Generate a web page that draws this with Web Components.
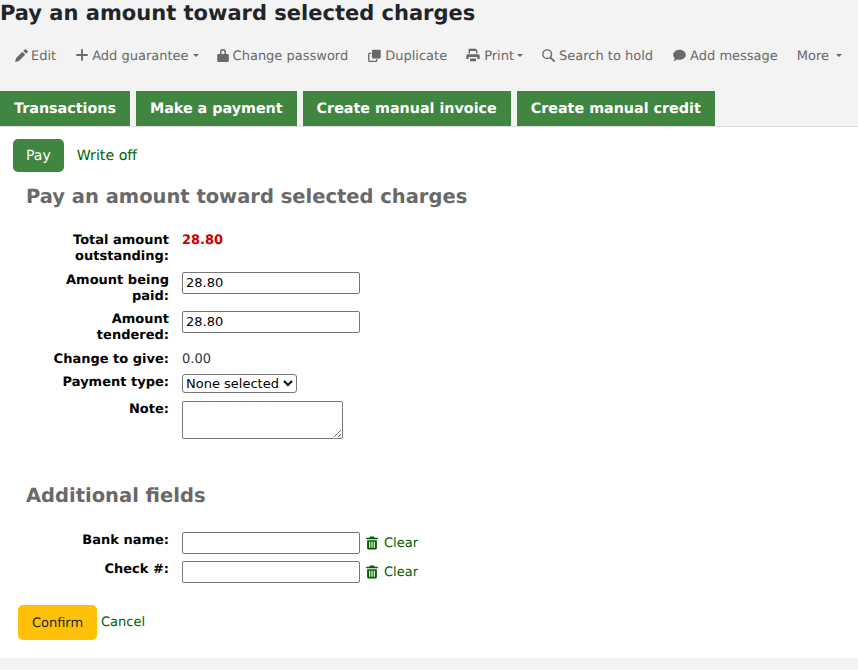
<!DOCTYPE html>
<html lang="en"><head><meta charset="utf-8"><title>Pay</title>
<style>
html,body{margin:0;padding:0;background:#f3f3f3}
body{width:858px;height:670px;overflow:hidden;font-family:"DejaVu Sans",sans-serif;font-size:13px;color:#000;text-rendering:geometricPrecision}
</style></head><body>
<pay-page></pay-page>
<script>
const ICONS={
pencil:'<svg viewBox="0 0 14 14" width="13" height="13"><path fill="currentColor" d="M10.400.5a1.100 1.100 0 0 1 1.500 0l1.600 1.600a1.100 1.100 0 0 1 0 1.500l-1.500 1.500-3.100-3.100zM7.900 3l3.100 3.100-6.900 6.900-4 1 1-4z"/></svg>',
plus:'<svg viewBox="0 0 12 12" width="12" height="12"><path fill="none" stroke="currentColor" stroke-width="1.800" d="M6 .3v11.400M.3 6h11.400"/></svg>',
lock:'<svg viewBox="0 0 12 14" width="12" height="14"><path fill="currentColor" d="M3 6V4a3 3 0 0 1 6 0v2h1.500a1.300 1.300 0 0 1 1.300 1.300v5.400a1.300 1.300 0 0 1-1.300 1.300h-9A1.300 1.300 0 0 1 .2 12.700V7.300A1.300 1.300 0 0 1 1.500 6zm1.500 0h3V4a1.500 1.500 0 0 0-3 0z"/></svg>',
copy:'<svg viewBox="0 0 14 14" width="13" height="13"><path fill="currentColor" d="M5.500.8H12.500a1.200 1.200 0 0 1 1.200 1.200v7a1.200 1.200 0 0 1-1.200 1.200H5.500a1.200 1.200 0 0 1-1.200-1.200V2a1.200 1.200 0 0 1 1.200-1.200z"/><path fill="none" stroke="currentColor" stroke-width="1.400" d="M3.600 4.700H1.800a1 1 0 0 0-1 1v6.600a1 1 0 0 0 1 1h6.600a1 1 0 0 0 1-1v-1.500"/></svg>',
print:'<svg viewBox="0 0 14 14" width="14" height="14"><path fill="currentColor" d="M2.600.8h7.200l1.600 1.600V5.600H10V3H4v2.600H2.600zM1.800 6.200h10.400a1.500 1.500 0 0 1 1.500 1.500v3.300h-2.300V9H2.600v2H.3V7.700a1.500 1.500 0 0 1 1.500-1.500zM4 10.400h6v2.800H4z"/></svg>',
search:'<svg viewBox="0 0 14 14" width="13" height="13"><circle cx="5.600" cy="5.600" r="4.700" fill="none" stroke="currentColor" stroke-width="1.500"/><path stroke="currentColor" stroke-width="1.900" stroke-linecap="round" d="M9.200 9.200l3.900 3.900"/></svg>',
chat:'<svg viewBox="0 0 14 14" width="13" height="13"><path fill="currentColor" d="M7 .9c3.700 0 6.800 2.400 6.800 5.400S10.700 11.700 7 11.700c-.9 0-1.800-.1-2.600-.4-1 .8-2.400 1.500-4.200 1.600.9-.9 1.500-1.900 1.700-2.900C.9 9 .2 7.700.2 6.300.2 3.300 3.300.9 7 .9z"/></svg>',
trash:'<svg viewBox="0 0 12 14" width="12" height="14"><path fill="currentColor" d="M4 .5h4l.6 1.300H11.800V3.300H.2V1.800h3.200zM1.100 4.200h9.800V12a1.600 1.600 0 0 1-1.600 1.600H2.700A1.600 1.600 0 0 1 1.100 12zM3.100 5.800v6h1.200v-6zm2.300 0v6h1.200v-6zm2.300 0v6h1.200v-6z"/></svg>'
};
class ToolBtn extends HTMLElement{
 constructor(){super();const s=this.attachShadow({mode:'open'});
 const ic=this.getAttribute('icon');const caret=this.hasAttribute('caret');
 s.innerHTML=`<style>
 :host{display:inline-flex;align-items:center;height:20px;color:#696969;font-size:13px;white-space:nowrap}
 .i{display:inline-flex;align-items:center;flex:none;margin-right:${this.getAttribute('gap')||3}px}
 .t{padding-top:2px}
 .c{display:inline-block;width:0;height:0;border:3px solid transparent;border-top-color:currentColor;border-bottom:0;margin-left:${this.getAttribute('cgap')||4}px;margin-top:1px}
 </style>${ic?`<span class="i">${ICONS[ic]}</span>`:''}<span class="t"><slot></slot></span>${caret?'<span class="c"></span>':''}`;}
}
class TabBtn extends HTMLElement{
 constructor(){super();this.attachShadow({mode:'open'}).innerHTML=`<style>
 :host{display:block;background:#408540;color:#fff;font-weight:700;font-size:14.3px;height:35px;line-height:36px;padding:0 14px;white-space:nowrap}
 </style><slot></slot>`;}
}
class FormRow extends HTMLElement{
 constructor(){super();this.attachShadow({mode:'open'}).innerHTML=`<style>
 :host{display:grid;grid-template-columns:118px 1fr;column-gap:13px;padding-left:51px;font-size:13px;line-height:16px}
 .l{font-weight:700;text-align:right;color:#000;padding-top:1px;margin-bottom:-1px}
 .v{display:flex;align-items:flex-start;gap:6px;min-height:16px}
 </style><div class="l"><slot name="label"></slot></div><div class="v"><slot></slot></div>`;}
}
class ClearLink extends HTMLElement{
 constructor(){super();this.attachShadow({mode:'open'}).innerHTML=`<style>
 :host{display:inline-flex;align-items:center;gap:6px;height:21px;color:#006100;font-size:13px}
 span{display:inline-flex}
 b{font-weight:400;padding-top:2px}
 </style><span>${ICONS.trash}</span><b><slot></slot></b>`;}
}
class PayPage extends HTMLElement{
 constructor(){super();this.attachShadow({mode:'open'}).innerHTML=`<style>
 :host{display:block;height:670px;background:#f3f3f3;font-family:"DejaVu Sans",sans-serif}
 h1{margin:0;font-size:21px;line-height:26px;font-weight:700;color:#212529;height:26px}
 .tools{display:flex;align-items:center;height:20px;margin-top:19px;padding-left:15px}
 .tabs{display:flex;gap:6px;margin-top:26px;height:35px}
 .panel{background:#fff;border-top:1px solid #ddd;height:532px;box-sizing:border-box;overflow:hidden}
 .sub{display:flex;align-items:center;height:33px;margin:12px 0 0 13px;font-size:14.2px}
 .pay{background:#408540;color:#fff;border-radius:5px;height:33px;line-height:35px;padding:0 13px;font-size:14px}
 .off{color:#006100;margin:0 0 0 13px}
 h2{margin:0;padding-left:26px;color:#696969;font-size:19.5px;font-weight:700;line-height:24px}
 input,select,textarea{font-family:"DejaVu Sans",sans-serif;font-size:13px;color:#000;background:#fff;box-sizing:border-box;margin:0;border:1px solid #767676;border-radius:2px}
 input{width:178px;height:22px;padding:0 3px 1px}
 select{width:115px;height:19px;padding:0;border-radius:3px;text-indent:-1px}
 textarea{display:block;width:161px;height:38px}
 .red{color:#c00;font-weight:700;padding-top:1px;margin-bottom:-1px}
 .val{color:#333;padding-top:1px;margin-bottom:-1px}
 .actions{display:flex;align-items:flex-start;margin:22px 0 0 18px}
 .confirm{background:#ffc107;color:#212529;border-radius:5px;height:35px;line-height:37px;width:79px;text-align:center;font-size:13px}
 .cancel{color:#006100;font-size:13px;margin:9px 0 0 4px;line-height:17px}
 </style>
 <h1>Pay an amount toward selected charges</h1>
 <div class="tools">
  <tool-btn icon="pencil" gap="3">Edit</tool-btn>
  <tool-btn icon="plus" gap="4" caret cgap="4" style="margin-left:20px">Add guarantee</tool-btn>
  <tool-btn icon="lock" gap="4" style="margin-left:18px">Change password</tool-btn>
  <tool-btn icon="copy" gap="4" style="margin-left:20px">Duplicate</tool-btn>
  <tool-btn icon="print" gap="4" caret cgap="3" style="margin-left:19px">Print</tool-btn>
  <tool-btn icon="search" gap="4" style="margin-left:19px">Search to hold</tool-btn>
  <tool-btn icon="chat" gap="4" style="margin-left:20px">Add message</tool-btn>
  <tool-btn caret cgap="7" style="margin-left:19px">More</tool-btn>
 </div>
 <div class="tabs">
  <tab-btn>Transactions</tab-btn><tab-btn>Make a payment</tab-btn><tab-btn>Create manual invoice</tab-btn><tab-btn>Create manual credit</tab-btn>
 </div>
 <div class="panel">
  <div class="sub"><span class="pay">Pay</span><span class="off">Write off</span></div>
  <h2 style="margin-top:13px">Pay an amount toward selected charges</h2>
  <form-row style="margin-top:23px"><span slot="label">Total amount outstanding:</span><span class="red">28.80</span></form-row>
  <form-row style="margin-top:8px"><span slot="label">Amount being paid:</span><input value="28.80"></form-row>
  <form-row style="margin-top:7px"><span slot="label">Amount tendered:</span><input value="28.80"></form-row>
  <form-row style="margin-top:8px"><span slot="label">Change to give:</span><span class="val">0.00</span></form-row>
  <form-row style="margin-top:7px"><span slot="label">Payment type:</span><select><option>None selected</option></select></form-row>
  <form-row style="margin-top:8px"><span slot="label">Note:</span><textarea></textarea></form-row>
  <h2 style="margin-top:45px">Additional fields</h2>
  <form-row style="margin-top:24px"><span slot="label">Bank name:</span><input><clear-link>Clear</clear-link></form-row>
  <form-row style="margin-top:7px"><span slot="label">Check #:</span><input><clear-link>Clear</clear-link></form-row>
  <div class="actions"><span class="confirm">Confirm</span><span class="cancel">Cancel</span></div>
 </div>`;}
}
customElements.define('tool-btn',ToolBtn);
customElements.define('tab-btn',TabBtn);
customElements.define('form-row',FormRow);
customElements.define('clear-link',ClearLink);
customElements.define('pay-page',PayPage);
</script>
</body></html>
